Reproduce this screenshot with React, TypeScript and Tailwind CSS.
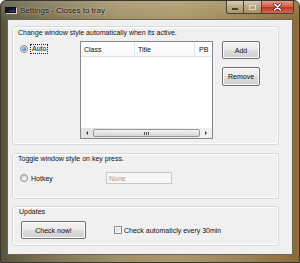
import React from "react";

function Radio({ checked }: { checked?: boolean }) {
  return (
    <span className="flex h-[8px] w-[8px] shrink-0 items-center justify-center rounded-full border border-[#8b8b8b] bg-[linear-gradient(135deg,#d4d4d4,#fbfbfb)]">
      {checked && (
        <span className="h-[4px] w-[4px] rounded-full bg-[radial-gradient(circle_at_35%_35%,#a6d8fb,#2a78bd_65%,#17508a)]" />
      )}
    </span>
  );
}

function Btn({ children, className }: { children: React.ReactNode; className: string }) {
  return (
    <div
      className={`flex items-center justify-center rounded-[2px] border border-[#707070] bg-[linear-gradient(#f2f2f2_0%,#ebebeb_50%,#dddddd_50%,#cfcfcf_100%)] text-[7px] leading-none text-[#111] shadow-[inset_0_0_0_1px_#fbfbfb] ${className}`}
    >
      {children}
    </div>
  );
}

function Group({ className, children }: { className: string; children: React.ReactNode }) {
  return (
    <div
      className={`ml-[4px] w-[267px] rounded-[3px] border border-[#d5d9dc] shadow-[inset_0_0_0_1px_#ffffff] ${className}`}
    >
      {children}
    </div>
  );
}

function ListView() {
  return (
    <div className="flex h-[98px] w-[133px] shrink-0 flex-col border border-[#828790] bg-white">
      <div className="flex h-[15px] border-b border-[#e2e2e2] bg-[linear-gradient(#ffffff,#f7f8f9)]">
        <div className="flex w-[54px] items-center border-r border-[#e3e5e8] pl-[3px]">Class</div>
        <div className="flex w-[60px] items-center border-r border-[#e3e5e8] pl-[3px]">Title</div>
        <div className="flex flex-1 items-center pl-[4px]">PB</div>
      </div>
      <div className="flex-1" />
      {/* horizontal scrollbar */}
      <div className="flex h-[10px] bg-[linear-gradient(90deg,#e3e3e3,#f1f1f1)]">
        <div className="flex w-[12px] items-center justify-center">
          <span className="h-0 w-0 border-y-[2px] border-r-[2px] border-y-transparent border-r-[#3c3c3c]" />
        </div>
        <div className="flex flex-1 py-[1px]">
          <div className="flex flex-1 items-center justify-center gap-[1px] rounded-[2px] border border-[#979797] bg-[linear-gradient(#f4f4f4,#e4e4e4_50%,#d6d6d6)]">
            <span className="h-[3px] w-[1px] bg-[#555]" />
            <span className="h-[3px] w-[1px] bg-[#555]" />
            <span className="h-[3px] w-[1px] bg-[#555]" />
          </div>
        </div>
        <div className="flex w-[12px] items-center justify-center">
          <span className="h-0 w-0 border-y-[2px] border-l-[2px] border-y-transparent border-l-[#3c3c3c]" />
        </div>
      </div>
    </div>
  );
}

export default function App() {
  return (
    <div className="h-[263px] w-[300px] overflow-hidden font-['Liberation_Sans',Arial,sans-serif] text-[7px] leading-[9px] text-[#111]">
      <div className="flex h-full w-full flex-col rounded-t-[6px] border border-[#38352a] bg-[linear-gradient(180deg,rgba(255,255,255,0.16)_0px,rgba(255,255,255,0)_20px),linear-gradient(90deg,#58553f_0%,#7a7152_14%,#a29169_40%,#aa9767_60%,#9c8656_80%,#8d6a37_100%)]">
        {/* title bar */}
        <div className="flex h-[18px] items-center pl-[4px] pr-[5px]">
          <div className="h-[6px] w-[11px] border border-[#0b0b12] bg-[linear-gradient(160deg,#101425_40%,#3a4f86)] shadow-[1px_1px_0_#d9d2bf]" />
          <span className="ml-[4px] text-[8px] text-[#1b1a16] [text-shadow:0_0_3px_rgba(255,250,235,0.9)]">
            Settings - Closes to tray
          </span>
          <div className="ml-auto flex h-[13px] self-start overflow-hidden rounded-b-[3px] border border-t-0 border-[#4a4230]">
            <div className="flex w-[17px] items-end justify-center border-r border-[#4a4230] bg-[linear-gradient(rgba(255,255,255,0.5),rgba(255,255,255,0.2)_50%,rgba(255,255,255,0.08))] pb-[3px]">
              <div className="h-[2px] w-[6px] border border-[#4a4230] bg-white" />
            </div>
            <div className="flex w-[18px] items-center justify-center border-r border-[#4a4230] bg-[linear-gradient(rgba(255,255,255,0.5),rgba(255,255,255,0.2)_50%,rgba(255,255,255,0.08))]">
              <div className="h-[5px] w-[7px] border border-[#f4f0e6] opacity-70" />
            </div>
            <div className="flex w-[31px] items-center justify-center bg-[linear-gradient(#e5998a,#cf5a43_50%,#b8351f_50%,#d5684f)]">
              <svg width="9" height="8" viewBox="0 0 9 8">
                <path d="M1.5 1 L7.5 7 M7.5 1 L1.5 7" stroke="#4a1a12" strokeWidth="3" strokeLinecap="round" />
                <path d="M1.5 1 L7.5 7 M7.5 1 L1.5 7" stroke="#ffffff" strokeWidth="1.6" strokeLinecap="round" />
              </svg>
            </div>
          </div>
        </div>

        {/* client area */}
        <div className="mx-[6px] h-[236px] border border-[#6b6650] bg-[#f0f0f0]">
          <Group className="mt-[6px] h-[119px]">
            <div className="pl-[5px] pt-[1px]">Change window style automatically when its active.</div>
            <div className="mt-[4px] flex pl-[7px]">
              <div className="flex w-[60px] items-center self-start pt-[3px]">
                <Radio checked />
                <span className="ml-[2px] border border-dotted border-[#222] px-[1px] leading-[8px]">Auto</span>
              </div>
              <ListView />
              <div className="ml-[9px] flex flex-col gap-[8px]">
                <Btn className="h-[18px] w-[38px]">Add</Btn>
                <Btn className="h-[19px] w-[38px]">Remove</Btn>
              </div>
            </div>
          </Group>

          <Group className="mt-[8px] h-[46px]">
            <div className="pl-[5px]">Toggle window style on key press.</div>
            <div className="mt-[9px] flex h-[12px] items-center pl-[7px]">
              <div className="flex w-[86px] items-center gap-[3px]">
                <Radio />
                <span>Hotkey</span>
              </div>
              <div className="flex h-[12px] w-[66px] items-center border border-[#c9c9c9] bg-[#f6f6f6] pl-[2px] text-[#9b9b9b]">
                None
              </div>
            </div>
          </Group>

          <Group className="mt-[7px] h-[40px]">
            <div className="pl-[6px]">Updates</div>
            <div className="mt-[5px] flex items-center pl-[8px]">
              <Btn className="h-[18px] w-[65px]">Check now!</Btn>
              <span className="ml-[28px] h-[8px] w-[8px] border border-[#8e8f8f] bg-[linear-gradient(135deg,#d8d8d8,#f7f7f7)] shadow-[inset_0_0_0_1px_#f4f4f4]" />
              <span className="ml-[2px]">Check automaticly every 30min</span>
            </div>
          </Group>
        </div>
      </div>
    </div>
  );
}
